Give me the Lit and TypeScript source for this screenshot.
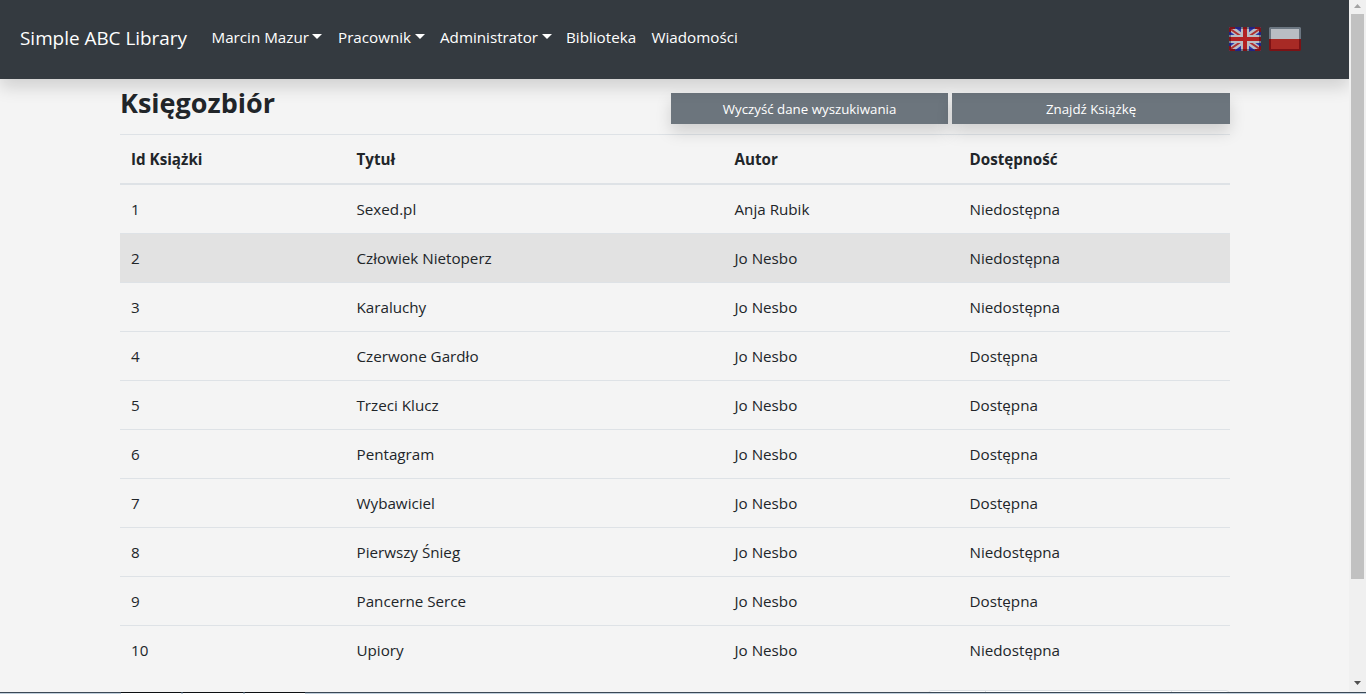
import { LitElement, html, css } from "lit";
import { customElement } from "lit/decorators.js";

const books: [string, string, boolean][] = [
  ["Sexed.pl", "Anja Rubik", false],
  ["Człowiek Nietoperz", "Jo Nesbo", false],
  ["Karaluchy", "Jo Nesbo", false],
  ["Czerwone Gardło", "Jo Nesbo", true],
  ["Trzeci Klucz", "Jo Nesbo", true],
  ["Pentagram", "Jo Nesbo", true],
  ["Wybawiciel", "Jo Nesbo", true],
  ["Pierwszy Śnieg", "Jo Nesbo", false],
  ["Pancerne Serce", "Jo Nesbo", true],
  ["Upiory", "Jo Nesbo", false],
];

const flagUk = html`<svg width="32" height="24" viewBox="0 0 32 24">
  <defs><clipPath id="uk"><rect width="32" height="24" rx="1.5" /></clipPath></defs>
  <g clip-path="url(#uk)">
    <rect width="32" height="24" fill="#2c37a8" />
    <path d="M0 0L32 24M32 0L0 24" stroke="#b9bdc3" stroke-width="6" />
    <path d="M0 1L13 10M32 1L19 10M0 23L13 14M32 23L19 14" stroke="#b0302f" stroke-width="2" />
    <path d="M16 0V24M0 12H32" stroke="#b9bdc3" stroke-width="8" />
    <path d="M16 0V24M0 12H32" stroke="#b22222" stroke-width="4" />
    <rect x="1" y="1" width="30" height="22" fill="none" stroke="#1d1d78" stroke-width="2" stroke-opacity=".75" />
    <path d="M12 1H14M18 1H20M12 23H14M18 23H20M1 8V10M31 8V10M1 14V16M31 14V16" stroke="#6c7782" stroke-width="2" />
    <path d="M0 1H6M26 1H32M0 23H6M26 23H32M14 1H18M14 23H18M1 10V14M31 10V14M1 0V5M31 0V5M1 19V24M31 19V24" stroke="#7f1418" stroke-width="2" />
  </g></svg>`;

const flagPl = html`<svg width="32" height="24" viewBox="0 0 32 24">
  <path d="M1 0H31L32 1V12H0V1Z" fill="#6c7782" />
  <path d="M0 12H32V23L31 24H1L0 23Z" fill="#7c1215" />
  <rect x="2" y="2" width="28" height="10" fill="#b9bdc3" />
  <rect x="2" y="12" width="28" height="10" fill="#a82a25" /></svg>`;

@customElement("app-root")
export class AppRoot extends LitElement {
  static styles = css`
    :host { display: grid; grid-template: 692px 2px / 1349px 17px; height: 694px; background: #f4f4f4; color: #212529; overflow: hidden;
      font: 15.2px/24px "Open Sans", "Noto Sans", sans-serif; }
    * { box-sizing: border-box; }
    .page { overflow: hidden; }
    nav { height: 79px; background: #343a40; color: #fff; display: flex; align-items: center; padding: 0 48px 3px 20px;
      box-shadow: 0 8px 16px rgba(0,0,0,.15); position: relative; white-space: nowrap; }
    .brand { font-size: 18.9px; width: 191.5px; }
    .item { display: flex; align-items: center; padding-bottom: 2px; }
    .w1 { width: 126.5px; } .w2 { width: 102px; } .w3 { width: 126px; } .w4 { width: 85.5px; }
    .drop::after { content: ""; margin-left: 3.5px; margin-top: -1px; border: 5px solid transparent; border-top-color: #fff; border-bottom: 0; }
    .flags { margin-left: auto; display: flex; gap: 8px; padding-top: 2px; }
    .flags svg { display: block; }
    main { width: 1110px; margin-left: 120px; }
    .head { display: flex; height: 55px; justify-content: space-between; }
    h1 { margin: 7px 0 0; font-size: 27px; line-height: 34px; font-weight: 700; }
    .actions { display: flex; gap: 4px; padding-top: 14px; }
    button { width: 278px; height: 31px; border: 0; padding: 1px 0 0; background: #6c757d; color: #fff; font: 13.3px/21px "Open Sans", sans-serif;
      box-shadow: 0 8px 16px rgba(0,0,0,.15); }
    button:first-child { width: 277px; }
    .row { display: grid; grid-template-columns: 225.5px 378px 235px 1fr; height: 49px; border-top: 1px solid #dee2e6; padding: 12px 11px; white-space: nowrap; }
    .th { height: 51px; border-bottom: 2px solid #dee2e6; font-weight: 700; }
    .th + .row { border-top: 0; height: 48px; }
    .on { background: #e2e2e2; }
    .pager { display: flex; width: 302px; height: 38px; margin: 16px 0 0 808px; border: 1px solid #dee2e6; border-radius: 4px; background: #fff; }
    .pager i { border-right: 1px solid #dee2e6; width: 57px; }
    .pager .mid { width: 186px; }
    .bar { background: #f0f0f0; display: flex; flex-direction: column; align-items: center; }
    .bar svg { display: block; }
    .thumb { width: 13px; height: 565px; background: #c1c1c1; }
    .task { grid-column: 1 / 3; display: flex; gap: 2px; padding-left: 121px; background: linear-gradient(#3a4855 50%, #c0cedb 50%); }
    .task i { width: 60px; background: linear-gradient(#0c0f12 50%, #fff 50%); }
  `;
  render() {
    return html`<div class="page"><nav>
      <span class="brand">Simple ABC Library</span>
      <span class="item drop w1">Marcin Mazur</span><span class="item drop w2">Pracownik</span>
      <span class="item drop w3">Administrator</span><span class="item w4">Biblioteka</span><span class="item">Wiadomości</span>
      <span class="flags">${flagUk}${flagPl}</span>
    </nav><main><div class="head"><h1>Księgozbiór</h1><div class="actions"><button>Wyczyść dane wyszukiwania</button><button>Znajdź Książkę</button></div></div>
      <div class="row th"><span>Id Książki</span><span>Tytuł</span><span>Autor</span><span>Dostępność</span></div>
      ${books.map((b, i) => html`<div class="row ${i === 1 ? "on" : ""}"><span>${i + 1}</span><span>${b[0]}</span><span>${b[1]}</span><span>${b[2] ? "Dostępna" : "Niedostępna"}</span></div>`)}
      <div class="pager"><i></i><i class="mid"></i></div>
    </main></div>
    <div class="bar"><svg width="17" height="14"><path d="M5 8L8.5 4L12 8Z" fill="#a3a3a3" /></svg><div class="thumb"></div>
      <svg width="17" height="113"><path d="M5 102H12L8.500 106Z" fill="#505050" /></svg></div>
    <div class="task"><i></i><i></i><i></i></div>`;
  }
}
